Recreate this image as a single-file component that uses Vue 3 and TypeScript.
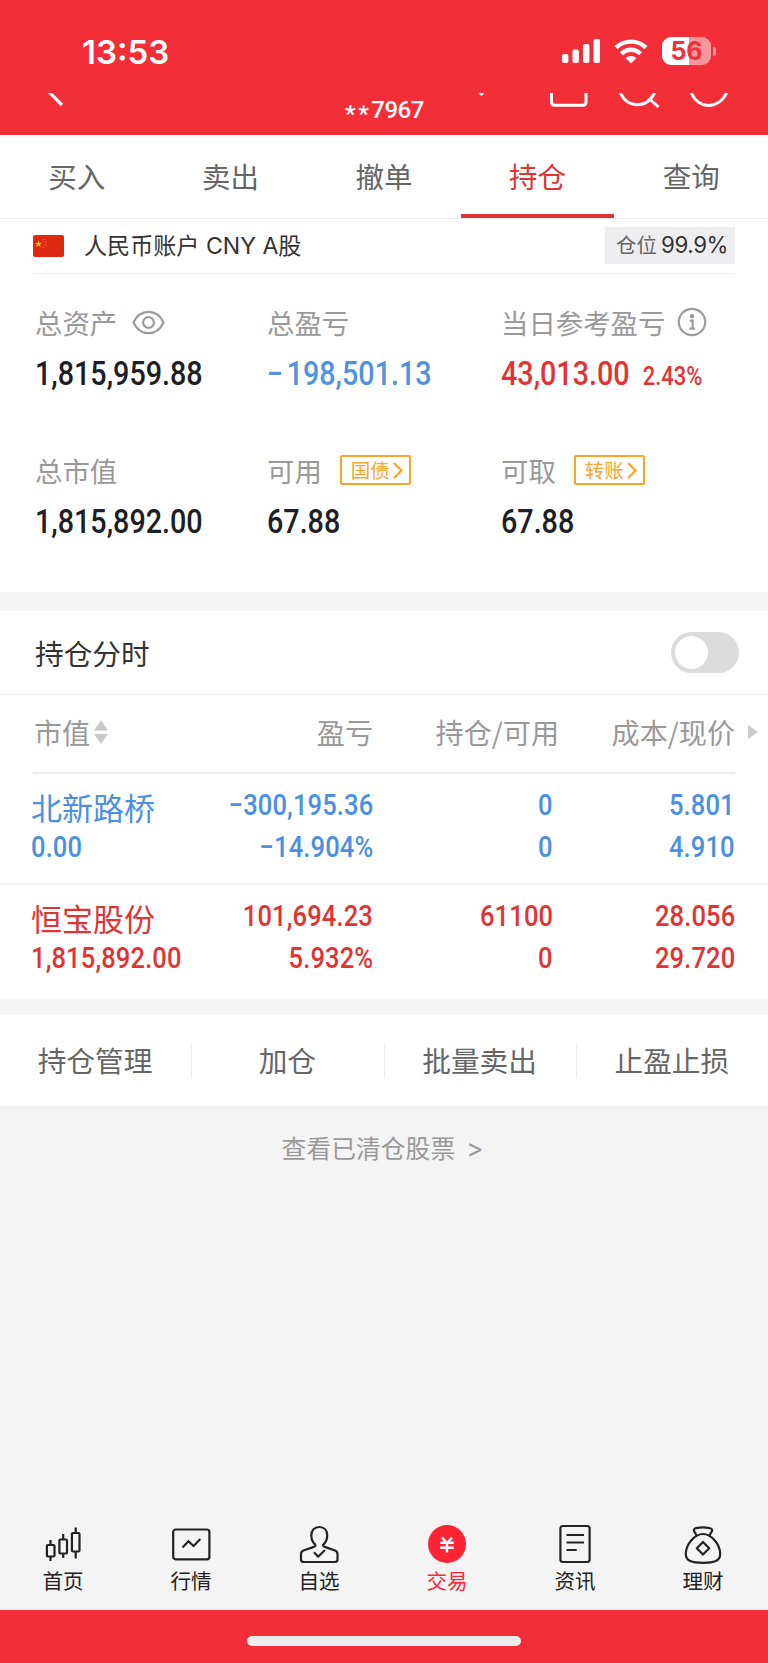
<script setup lang="ts">
interface Holding {
  name: string
  tone: 'up' | 'down'
  value: string
  profit: string
  rate: string
  held: string
  usable: string
  cost: string
  price: string
}

const tabs: string[] = ['买入', '卖出', '撤单', '持仓', '查询']
const activeTab = '持仓'

const holdings: Holding[] = [
  {
    name: '北新路桥',
    tone: 'down',
    value: '0.00',
    profit: '−300,195.36',
    rate: '−14.904%',
    held: '0',
    usable: '0',
    cost: '5.801',
    price: '4.910',
  },
  {
    name: '恒宝股份',
    tone: 'up',
    value: '1,815,892.00',
    profit: '101,694.23',
    rate: '5.932%',
    held: '61100',
    usable: '0',
    cost: '28.056',
    price: '29.720',
  },
]

const actions: string[] = ['持仓管理', '加仓', '批量卖出', '止盈止损']
const nav: string[] = ['首页', '行情', '自选', '交易', '资讯', '理财']
</script>

<template>
  <div class="screen">
    <header class="top">
      <div class="status">
        <span class="clock">13:53</span>
        <div class="status-icons">
          <svg width="38" height="24" viewBox="0 0 38 24" fill="#fff">
            <rect x="0" y="15" width="6.4" height="9" rx="2" />
            <rect x="10.5" y="10.5" width="6.4" height="13.5" rx="2" />
            <rect x="21" y="5" width="6.4" height="19" rx="2" />
            <rect x="31.5" y="0" width="6.5" height="24" rx="2" />
          </svg>
          <svg class="wifi" width="34" height="25" viewBox="0 0 34 25">
            <g fill="none" stroke="#fff" stroke-width="4.4">
              <path d="M2 8.7 A21.5 21.5 0 0 1 32 8.7" />
              <path d="M7.4 14.8 A13.4 13.4 0 0 1 26.600 14.8" />
            </g>
            <path d="M17 24.4 L11.5 19 A8.3 8.3 0 0 1 22.5 19 Z" fill="#fff" />
          </svg>
          <div class="battery"><span>56</span></div>
          <i class="nub"></i>
        </div>
      </div>
      <div class="titlebar">
        <svg class="back" width="20" height="20" viewBox="0 0 20 20">
          <path d="M2.5 -1.5 L16 12" stroke="#fff" stroke-width="3.2" fill="none" />
        </svg>
        <span class="account-no"><span class="mask">**</span>7967</span>
        <svg class="tools" width="270" height="20" viewBox="0 0 270 20" fill="none" stroke="#fff" stroke-width="3">
          <path d="M0.5 0 H6.5 L3.5 3 Z" fill="#fff" stroke="none" />
          <path d="M73.500 -3 V9 Q73.500 12.200 76.500 12.200 H105 Q108 12.200 108 9 V-3" />
          <path d="M142 -1 C149 16 169 16 177 -1 M171.500 6 L180.500 14" />
          <path d="M213 -1 C220 17 241 17 249 -1" />
        </svg>
      </div>
    </header>

    <nav class="tabs">
      <span v-for="t in tabs" :key="t" :class="['tab', { active: t === activeTab }]">{{ t }}</span>
    </nav>

    <section class="account">
      <div class="account-head">
        <svg class="flag" width="31" height="22" viewBox="0 0 31 22">
          <rect width="31" height="22" rx="2" fill="#de2910" />
          <path d="M5.500 5.500 L6.400 8 L9 8 L6.900 9.500 L7.700 12 L5.500 10.500 L3.300 12 L4.100 9.500 L2 8 L4.600 8 Z" fill="#fc0" />
          <g fill="#f0781c">
            <circle cx="10.500" cy="4.800" r=".8" /><circle cx="12.800" cy="7" r=".8" />
            <circle cx="12.800" cy="10" r=".8" /><circle cx="10.500" cy="12.500" r=".8" />
          </g>
        </svg>
        <span class="account-name">人民币账户 CNY A股</span>
        <span class="position"><span class="position-label">仓位</span>99.9%</span>
      </div>

      <div class="stats">
        <div class="stat">
          <div class="label">
            总资产
            <svg class="eye" width="33" height="25" viewBox="0 0 33 25" fill="none" stroke="#9c9c9c" stroke-width="2.200">
              <path d="M1.500 12.500 C8 -1.700 25 -1.700 31.500 12.500 C25 26.700 8 26.700 1.500 12.500 Z" />
              <circle cx="16.500" cy="12.500" r="5.400" />
            </svg>
          </div>
          <div class="num">1,815,959.88</div>
        </div>
        <div class="stat">
          <div class="label">总盈亏</div>
          <div class="num down"><span class="sign">−</span>198,501.13</div>
        </div>
        <div class="stat">
          <div class="label">
            当日参考盈亏
            <svg class="info" width="30" height="30" viewBox="0 0 30 30" fill="none" stroke="#9c9c9c" stroke-width="2.200">
              <circle cx="15" cy="15" r="13.200" />
              <circle cx="15" cy="9.200" r="2.200" fill="#9c9c9c" stroke="none" />
              <path d="M12.800 13.600 H15.600 V21.500 M12.500 21.600 H18" />
            </svg>
          </div>
          <div class="num up">43,013.00<span class="pct">2.43%</span></div>
        </div>
        <div class="stat">
          <div class="label">总市值</div>
          <div class="num">1,815,892.00</div>
        </div>
        <div class="stat">
          <div class="label">
            可用
            <span class="chip">国债
              <svg width="10" height="17" viewBox="0 0 10 17"><path d="M1 1 L8.500 8.500 L1 16" fill="none" stroke="#f9a52c" stroke-width="2.200" /></svg>
            </span>
          </div>
          <div class="num">67.88</div>
        </div>
        <div class="stat">
          <div class="label">
            可取
            <span class="chip">转账
              <svg width="10" height="17" viewBox="0 0 10 17"><path d="M1 1 L8.500 8.500 L1 16" fill="none" stroke="#f9a52c" stroke-width="2.200" /></svg>
            </span>
          </div>
          <div class="num">67.88</div>
        </div>
      </div>
    </section>

    <section class="holdings">
      <div class="toggle-row">
        <span>持仓分时</span>
        <span class="switch"></span>
      </div>
      <div class="grid head">
        <span class="sortable">市值
          <svg width="14" height="25" viewBox="0 0 14 25" fill="#c8c8c8"><path d="M7 0 L14 10.500 H0 Z M0 14 H14 L7 24 Z" /></svg>
        </span>
        <span>盈亏</span>
        <span>持仓/可用</span>
        <span>成本/现价</span>
        <svg class="more" width="10" height="14" viewBox="0 0 10 14" fill="#ccc"><path d="M0 0 L10 7 L0 14 Z" /></svg>
      </div>
      <div v-for="h in holdings" :key="h.name" :class="['grid', 'row', h.tone]">
        <div class="cell first"><span class="name">{{ h.name }}</span><span class="val">{{ h.value }}</span></div>
        <div class="cell"><span class="val">{{ h.profit }}</span><span class="val">{{ h.rate }}</span></div>
        <div class="cell held"><span class="val">{{ h.held }}</span><span class="val">{{ h.usable }}</span></div>
        <div class="cell"><span class="val">{{ h.cost }}</span><span class="val">{{ h.price }}</span></div>
      </div>
    </section>

    <div class="actions">
      <span v-for="a in actions" :key="a">{{ a }}</span>
    </div>

    <div class="cleared">查看已清仓股票<span>&gt;</span></div>

    <nav class="bottom">
      <div v-for="(n, i) in nav" :key="n" :class="['nav-item', { current: i === 3 }]">
        <svg width="40" height="40" viewBox="0 0 40 40" fill="none" stroke="#222" stroke-width="2.200" stroke-linejoin="round">
          <g v-if="i === 0">
            <path d="M7.500 16 V21 M7.500 32.500 V37 M20.200 10 V15.500 M20.200 29.500 V34 M32.700 3.500 V9 M32.700 27.500 V34.500" />
            <rect x="3.900" y="21" width="7.600" height="11.500" rx="1" />
            <rect x="16.400" y="15.500" width="7.600" height="14" rx="1" />
            <rect x="28.900" y="9" width="7.600" height="18.500" rx="1" />
          </g>
          <g v-else-if="i === 1">
            <rect x="2.200" y="5.500" width="36.200" height="29.800" rx="2.500" />
            <path d="M11.500 23.500 L17.500 17.200 L22.600 22 L29.300 15" />
          </g>
          <g v-else-if="i === 2">
            <path d="M16.600 20.800 C13.500 18.500 12.300 15.500 12.300 11.500 C12.300 6 15.500 3 20.300 3 C25 3 28.200 6 28.200 11.500 C28.200 15.500 27 18.500 24 20.800 C24 22 25 22.800 27 23.400 L36 26.500 Q38.500 27.500 38.500 30 V35.500 Q38.500 38 36 38 H4.500 Q2 38 2 35.500 V30 Q2 27.500 4.500 26.500 L13.500 23.400 C15.500 22.800 16.600 22 16.600 20.800" />
            <path d="M15 28.300 L19.200 32.700 L26 26" />
          </g>
          <g v-else-if="i === 3">
            <circle cx="20" cy="20" r="19" fill="#ff2435" stroke="none" />
            <path d="M15 13.500 L20 19 L25 13.500 M20 18.500 V28.500 M13.200 18.800 H26.800 M13.200 23.800 H26.800" stroke="#fff" stroke-width="2.400" />
          </g>
          <g v-else-if="i === 4">
            <rect x="5.400" y="2" width="29.200" height="36" rx="2.500" />
            <path d="M11.500 11 H29 M11.500 18.500 H29 M11.500 26 H21.700" />
          </g>
          <g v-else>
            <path d="M13.500 11.500 L11 7 C10.500 5.500 11.500 4.500 13 4.200 C17.500 3.200 22.500 3.200 27 4.200 C28.500 4.500 29.500 5.500 29 7 L26.500 11.500" />
            <path d="M20 10 C28 10 37.200 20 37.200 30 C37.200 37 31 38.800 20 38.800 C9 38.800 2.800 37 2.800 30 C2.800 20 12 10 20 10 Z" />
            <path d="M20 18 L26.200 24.300 L20 30.600 L13.800 24.300 Z" />
          </g>
        </svg>
        <span>{{ n }}</span>
      </div>
    </nav>
    <footer class="home"><i></i></footer>
  </div>
</template>

<style>
body {
  background: #f4f4f4;
}
</style>

<style scoped>
* {
  box-sizing: border-box;
}
.screen {
  width: 768px;
  height: 1663px;
  display: flex;
  flex-direction: column;
  background: #f4f4f4;
  font-family: "Noto Sans CJK SC", sans-serif;
  color: #333;
  white-space: nowrap;
  overflow: hidden;
}
svg {
  flex: none;
  display: block;
}
.top {
  height: 135px;
  flex: none;
  background: #f22f38;
  color: #fff;
}
.status {
  height: 93px;
  display: flex;
  justify-content: space-between;
  padding: 31px 52px 0 82px;
}
.clock {
  font: 600 33px/42px Inter, sans-serif;
}
.status-icons {
  display: flex;
  align-items: center;
  height: 40px;
}
.wifi {
  margin-left: 14px;
}
.battery {
  width: 49px;
  height: 28px;
  margin-left: 14px;
  border-radius: 9px;
  background: linear-gradient(90deg, #fff 56%, #f9979b 56%);
  color: #f22f38;
  font: 700 25px/29px Inter, sans-serif;
  text-align: center;
}
.nub {
  width: 3px;
  height: 9px;
  margin-left: 2px;
  border-radius: 0 4px 4px 0;
  background: #f9979b;
}
.titlebar {
  height: 42px;
  display: flex;
  padding-left: 46px;
  overflow: hidden;
}
.account-no {
  display: flex;
  width: 78px;
  margin-left: 279px;
  font: 500 24px/35px Roboto, sans-serif;
  letter-spacing: -0.500px;
}
.mask {
  padding-top: 4px;
  letter-spacing: 2.500px;
}
.tools {
  margin-left: 55px;
}
.tabs {
  height: 84px;
  flex: none;
  display: grid;
  grid-template-columns: repeat(5, 1fr);
  background: #fff;
  border-bottom: 1px solid #ededed;
}
.tab {
  display: flex;
  flex-direction: column;
  align-items: center;
  font-size: 28.500px;
  line-height: 81px;
  color: #666;
  height: 83px;
}
.tab.active {
  color: #e03434;
  border-bottom: 4px solid #e03434;
}
.account {
  height: 373px;
  flex: none;
  background: #fff;
}
.account-head {
  height: 55px;
  margin: 0 33px;
  display: flex;
  align-items: center;
  border-bottom: 1px solid #eee;
}
.account-name {
  margin-left: 20px;
  flex: 1;
  font: 23.100px/54px Inter, "Noto Sans CJK SC", sans-serif;
}
.position {
  width: 130px;
  height: 37px;
  margin-bottom: 2px;
  background: #eeeef0;
  padding-left: 11px;
  font: 22.300px/36px Inter, "Noto Sans CJK SC", sans-serif;
  letter-spacing: -0.400px;
}
.position-label {
  color: #666;
  font-size: 20.500px;
  letter-spacing: 0;
  margin-right: 4px;
}
.stats {
  display: grid;
  grid-template-columns: 232px 234px 1fr;
  grid-auto-rows: 148px;
  padding: 28px 0 0 35px;
}
.label {
  height: 40px;
  display: flex;
  align-items: center;
  font-size: 27.400px;
  line-height: 40px;
  color: #999;
}
.eye {
  margin-left: 15px;
}
.info {
  margin-left: 12px;
}
.num {
  height: 50px;
  margin-top: 7px;
  font: 500 33px/50px Roboto, sans-serif;
  color: #1c2026;
  transform: scaleX(0.87);
  transform-origin: 0 50%;
}
.num.down {
  color: #5291dd;
}
.num.up {
  color: #e03434;
}
.sign {
  display: inline-block;
  margin-right: 4px;
}
.pct {
  font-size: 25.200px;
  margin-left: 15px;
}
.chip {
  width: 71px;
  height: 30px;
  margin-left: 18px;
  display: flex;
  align-items: center;
  gap: 3px;
  padding-left: 9px;
  border: 2px solid #f9a52c;
  border-radius: 2px;
  color: #f9a52c;
  font-size: 19.500px;
  line-height: 26px;
}
.holdings {
  margin-top: 19px;
  background: #fff;
  height: 388px;
  flex: none;
}
.toggle-row {
  height: 84px;
  display: flex;
  align-items: center;
  justify-content: space-between;
  padding: 0 29px 0 35px;
  border-bottom: 1px solid #eee;
  font-size: 28.700px;
  line-height: 80px;
}
.switch {
  width: 68px;
  height: 41px;
  border-radius: 21px;
  background: radial-gradient(circle at 20.500px 20.500px, #fff 16px, #dcdcdc 16.800px);
}
.grid {
  display: grid;
  grid-template-columns: 152px 187px 186px 176px 23px;
  padding-left: 34px;
  text-align: right;
}
.head {
  height: 79px;
  line-height: 74px;
  font-size: 28.100px;
  color: #999;
  background: linear-gradient(#eee, #eee) 33px 100% / 702px 2px no-repeat;
}
.sortable {
  display: flex;
  align-items: center;
  height: 74px;
  gap: 4px;
}
.more {
  margin: 30px 0 0 13px;
}
.row {
  height: 111px;
  padding-top: 10px;
  border-bottom: 2px solid #f2f2f2;
}
.row + .row {
  border-bottom: 0;
}
.cell {
  display: flex;
  flex-direction: column;
  align-items: flex-end;
}
.cell.first {
  align-items: flex-start;
  margin-left: -3px;
}
.cell.held {
  padding-right: 6px;
}
.val {
  font: 500 29px/42px Roboto, sans-serif;
  letter-spacing: 0.150px;
  transform: scaleX(0.88);
  transform-origin: 100% 50%;
}
.first .val {
  transform-origin: 0 50%;
}
.name {
  font-size: 31px;
  line-height: 46px;
  height: 42px;
}
.row.down {
  color: #4a8fe2;
}
.row.up {
  color: #e03434;
}
.actions {
  margin-top: 16px;
  height: 91px;
  flex: none;
  display: grid;
  grid-template-columns: repeat(4, 1fr);
  background: #fff;
  text-align: center;
  font-size: 28.700px;
  line-height: 90px;
  color: #666;
  margin-left: -1px;
}
.actions span + span {
  background: linear-gradient(#ededed, #ededed) 0 50% / 1px 35px no-repeat;
}
.cleared {
  height: 84px;
  flex: none;
  text-align: center;
  font-size: 24.800px;
  line-height: 82px;
  color: #999;
  padding-right: 3px;
}
.cleared span {
  margin-left: 11px;
  font: 26px/30px Inter, sans-serif;
}
.bottom {
  margin-top: auto;
  height: 86px;
  flex: none;
  display: grid;
  grid-template-columns: repeat(6, 1fr);
  margin-left: -1px;
  margin-right: 1px;
  color: #222;
}
.nav-item {
  display: flex;
  flex-direction: column;
  align-items: center;
  font-size: 20.600px;
  line-height: 32px;
}
.nav-item.current {
  color: #ff2435;
}
.home {
  height: 53px;
  flex: none;
  background: #f22f38;
  display: flex;
  justify-content: center;
  padding-top: 26px;
}
.home i {
  width: 274px;
  height: 10px;
  border-radius: 5px;
  background: #eee;
}
</style>
